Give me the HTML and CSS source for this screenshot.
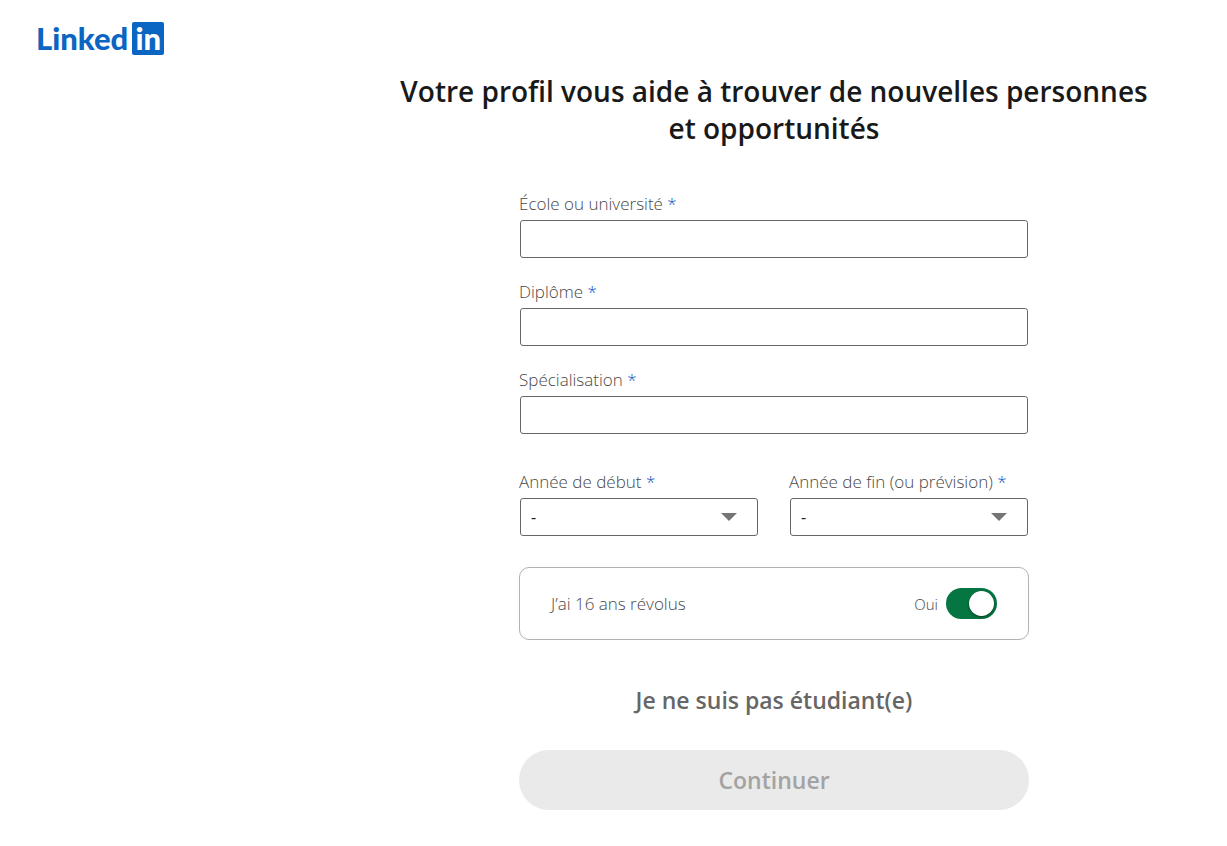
FILE: index.html
```html
<!DOCTYPE html>
<html lang="fr">
<head>
<meta charset="utf-8">
<meta name="viewport" content="width=device-width, initial-scale=1">
<title>LinkedIn</title>
<link rel="stylesheet" href="styles.css">
</head>
<body>
<header class="header">
  <a class="logo" href="#" aria-label="LinkedIn"><span class="logo-word">Linked</span><span class="logo-box">in</span></a>
</header>
<main class="main">
  <h1 class="title">Votre profil vous aide à trouver de nouvelles personnes et opportunités</h1>
  <form class="form">
    <div class="fields">
      <div class="field">
        <label class="label" for="school">École ou université <span class="required">*</span></label>
        <input class="control" id="school" type="text">
      </div>
      <div class="field">
        <label class="label" for="degree">Diplôme <span class="required">*</span></label>
        <input class="control" id="degree" type="text">
      </div>
      <div class="field">
        <label class="label" for="major">Spécialisation <span class="required">*</span></label>
        <input class="control" id="major" type="text">
      </div>
    </div>
    <div class="years">
      <div class="field">
        <label class="label" for="start">Année de début <span class="required">*</span></label>
        <div class="select-wrap">
          <select class="control select" id="start"><option>-</option></select>
          <svg class="caret" viewBox="0 0 16 8" aria-hidden="true"><path d="M0 0h16L8 8z"/></svg>
        </div>
      </div>
      <div class="field">
        <label class="label" for="end">Année de fin (ou prévision) <span class="required">*</span></label>
        <div class="select-wrap">
          <select class="control select" id="end"><option>-</option></select>
          <svg class="caret" viewBox="0 0 16 8" aria-hidden="true"><path d="M0 0h16L8 8z"/></svg>
        </div>
      </div>
    </div>
    <div class="age">
      <label class="age-label" for="age">J’ai 16 ans révolus</label>
      <span class="age-state">Oui</span>
      <input class="toggle" id="age" type="checkbox" role="switch" checked>
    </div>
    <button class="not-student" type="button">Je ne suis pas étudiant(e)</button>
    <button class="submit" type="submit" disabled>Continuer</button>
  </form>
</main>
</body>
</html>
```

FILE: styles.css
```css
* {
  box-sizing: border-box;
}

body {
  margin: 0;
  background: #fff;
  color: #191919;
  font-family: "Open Sans", "Noto Sans", sans-serif;
}

button,
input,
select {
  font-family: inherit;
}

.header {
  padding: 22px 36px 0;
}

.logo {
  display: inline-flex;
  align-items: center;
  gap: 4px;
  vertical-align: top;
  color: #0a66c2;
  font: 900 31px/33px Lato, sans-serif;
  text-decoration: none;
}

.logo-box {
  width: 32px;
  height: 33px;
  border-radius: 2px;
  background: #0a66c2;
  color: #fff;
  text-align: center;
}

.main {
  padding: 18px 0 36px 321px;
}

.title {
  max-width: 768px;
  margin: 0 auto 45px;
  font-size: 28px;
  font-weight: 600;
  line-height: 37px;
  text-align: center;
}

.form {
  display: flex;
  flex-direction: column;
  max-width: 510px;
  margin: 0 auto;
}

.fields {
  display: grid;
  gap: 22px;
}

.field {
  display: flex;
  flex-direction: column;
  gap: 4px;
}

.label {
  color: #484848;
  font-size: 17px;
  font-weight: 300;
  line-height: 24px;
}

.required {
  color: #0a4fc2;
}

.control {
  height: 38px;
  margin: 0 1px;
  padding: 0 10px;
  border: 1px solid #666;
  border-radius: 3px;
  background: #fff;
  color: #191919;
  font-size: 16px;
}

.years {
  display: grid;
  grid-template-columns: 1fr 1fr;
  gap: 30px;
  margin-top: 36px;
}

.select-wrap {
  position: relative;
  display: grid;
}

.select {
  appearance: none;
}

.caret {
  position: absolute;
  top: 15px;
  right: 22px;
  width: 16px;
  height: 8px;
  fill: #757575;
  pointer-events: none;
}

.age {
  display: flex;
  align-items: center;
  margin-top: 31px;
  padding: 20px 31px;
  border: 1px solid #b2b2b2;
  border-radius: 10px;
  color: #484848;
  font-size: 17px;
  font-weight: 300;
}

.age-label {
  flex: 1;
}

.age-state {
  margin-right: 8px;
  font-size: 15px;
}

.toggle {
  display: flex;
  align-items: center;
  justify-content: flex-end;
  width: 51px;
  height: 31px;
  margin: 0;
  padding: 0 3px;
  border-radius: 16px;
  background: #057642;
  appearance: none;
}

.toggle::before {
  width: 25px;
  height: 25px;
  border-radius: 50%;
  background: #fff;
  box-shadow: 0 1px 3px rgba(0, 0, 0, 0.5);
  content: "";
}

.toggle:not(:checked) {
  justify-content: flex-start;
  background: #666;
}

.not-student,
.submit {
  height: 60px;
  border: 0;
  font-size: 23px;
  font-weight: 600;
}

.not-student {
  align-self: center;
  margin-top: 30px;
  padding: 0 24px;
  background: none;
  color: #666;
}

.submit {
  margin-top: 20px;
  border-radius: 30px;
  background: #eaeaea;
  color: #a3a3a3;
}
```
